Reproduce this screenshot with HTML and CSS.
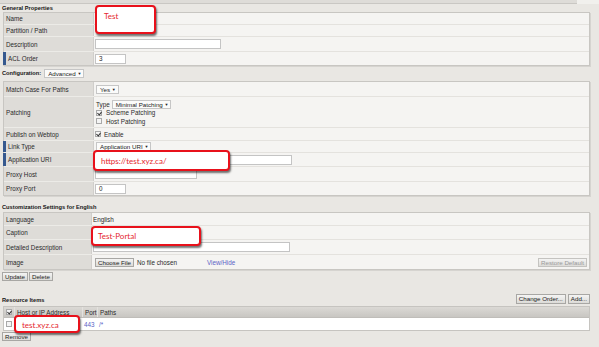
FILE: index.html
```html
<!DOCTYPE html>
<html lang="en">
<head>
  <meta charset="UTF-8" />
  <title>Access Resource Properties</title>
  <link rel="stylesheet" href="styles.css">
</head>
<body>
  <div class="top-strip"><div class="strip-bar"></div></div>

  <div class="section-title gp-title">General Properties</div>
  <div class="props">
    <div class="prow h11"><div class="lbl">Name</div><div class="val"></div></div>
    <div class="prow h12"><div class="lbl">Partition / Path</div><div class="val"></div></div>
    <div class="prow h15"><div class="lbl">Description</div><div class="val"><span class="input w125"></span></div></div>
    <div class="prow h14"><div class="lbl req">ACL Order</div><div class="val"><span class="input w30">3</span></div></div>
  </div>

  <div class="section-title cfg-title">Configuration: <span class="select">Advanced <i>▼</i></span></div>
  <div class="props">
    <div class="prow h14"><div class="lbl">Match Case For Paths</div><div class="val"><span class="select">Yes <i>▼</i></span></div></div>
    <div class="prow h31">
      <div class="lbl">Patching</div>
      <div class="val stack">
        <div class="line">Type <span class="select">Minimal Patching <i>▼</i></span></div>
        <div class="line"><span class="check on"></span>Scheme Patching</div>
        <div class="line"><span class="check"></span>Host Patching</div>
      </div>
    </div>
    <div class="prow h13"><div class="lbl">Publish on Webtop</div><div class="val"><span class="check on"></span>Enable</div></div>
    <div class="prow h12"><div class="lbl req">Link Type</div><div class="val"><span class="select">Application URI <i>▼</i></span></div></div>
    <div class="prow h14"><div class="lbl req">Application URI</div><div class="val"><span class="input w196"></span></div></div>
    <div class="prow h15"><div class="lbl">Proxy Host</div><div class="val"><span class="input w101"></span></div></div>
    <div class="prow h14"><div class="lbl">Proxy Port</div><div class="val"><span class="input w30">0</span></div></div>
  </div>

  <div class="section-title cust-title">Customization Settings for English</div>
  <div class="props narrow">
    <div class="prow h12"><div class="lbl">Language</div><div class="val">English</div></div>
    <div class="prow h14"><div class="lbl">Caption</div><div class="val"></div></div>
    <div class="prow h15"><div class="lbl">Detailed Description</div><div class="val"><span class="input w196"></span></div></div>
    <div class="prow h15">
      <div class="lbl">Image</div>
      <div class="val">
        <span class="btn">Choose File</span>
        <span class="nofile">No file chosen</span>
        <a class="link">View/Hide</a>
        <span class="btn disabled restore">Restore Default</span>
      </div>
    </div>
  </div>
  <div class="btn-row">
    <span class="btn">Update</span>
    <span class="btn">Delete</span>
  </div>

  <div class="res-head">
    <div class="section-title">Resource Items</div>
    <div class="res-actions">
      <span class="btn">Change Order...</span>
      <span class="btn">Add...</span>
    </div>
  </div>
  <div class="items">
    <div class="irow head">
      <div class="c-chk"><span class="check on"></span></div>
      <div>Host or IP Address</div>
      <div>Port</div>
      <div>Paths</div>
    </div>
    <div class="irow">
      <div class="c-chk"><span class="check"></span></div>
      <div></div>
      <div><a class="link">443</a></div>
      <div><a class="link">/*</a></div>
    </div>
  </div>
  <div class="btn-row remove-row">
    <span class="btn">Remove</span>
  </div>

  <div class="callout callout-name">Test</div>
  <div class="callout callout-uri">https://test.xyz.ca/</div>
  <div class="callout callout-caption">Test-Portal</div>
  <div class="callout callout-host">test.xyz.ca</div>
</body>
</html>
```

FILE: styles.css
```css
* {
  margin: 0;
  padding: 0;
  box-sizing: border-box;
}

body {
  position: relative;
  width: 599px;
  height: 347px;
  overflow: hidden;
  background: #e9e7e3;
  font-family: 'Liberation Sans', Arial, sans-serif;
  font-size: 6.3px;
  line-height: 7px;
  color: #2a2a2a;
  padding: 0 9px 0 3px;
}

.top-strip {
  height: 4px;
  margin: 0 -9px 0 -3px;
  background: #f1f0ed;
}

.strip-bar {
  width: 577px;
  height: 4px;
  background: #dedcd8;
  border-bottom: 1px solid #c9c7c3;
}

.section-title {
  font-weight: bold;
  font-size: 5.7px;
  margin-left: -1px;
  color: #151515;
}

.gp-title {
  height: 8px;
  padding-top: 1px;
}

.cfg-title {
  display: flex;
  align-items: center;
  gap: 2px;
  height: 15px;
  padding-bottom: 1px;
}

.cust-title {
  height: 16px;
  padding-top: 8px;
}

/* property tables */
.props {
  width: 587px;
  background: #f5f4f2;
  border: 1px solid #c8c6c2;
  box-shadow: 1px 1px 0 #d6d4d0;
}

.prow {
  display: grid;
  grid-template-columns: 90px 1fr;
  border-top: 1px solid #e4e2de;
}

.prow:first-child {
  border-top: none;
}

.props.narrow .prow {
  grid-template-columns: 88px 1fr;
}

.h11 { height: 11px; }
.h12 { height: 12px; }
.h13 { height: 13px; }
.h14 { height: 14px; }
.h15 { height: 15px; }
.h31 { height: 31px; }

.lbl {
  display: flex;
  align-items: center;
  background: #dedcd8;
  border-right: 1px solid #d0cecb;
  padding-left: 2px;
}

.prow + .prow .lbl {
  box-shadow: 0 -1px 0 #ecebe7;
}

.prow .lbl.req {
  padding-left: 4px;
  box-shadow: 0 -1px 0 #ecebe7, -1px 0 0 #36598f, inset 2px 0 0 #36598f;
}

.val {
  display: flex;
  align-items: center;
  padding-left: 1px;
}

.val.stack {
  flex-direction: column;
  align-items: flex-start;
  justify-content: flex-start;
  padding-top: 3px;
  padding-left: 2px;
}

.line {
  display: flex;
  align-items: center;
  gap: 1px;
  height: 8.5px;
}

.input {
  display: inline-block;
  height: 10px;
  line-height: 8px;
  background: #fff;
  border: 1px solid #c4c4c4;
  padding-left: 3px;
}

.w30 { width: 31px; }
.w101 { width: 102px; }
.w125 { width: 126px; }
.w196 { width: 197px; }

.select {
  display: inline-block;
  height: 9px;
  line-height: 7px;
  padding: 0 2px 0 3px;
  margin-left: 1px;
  background: #fbfbfa;
  border: 1px solid #c6c6c6;
  font-weight: normal;
  font-size: 6.2px;
  color: #222;
}

.select i {
  font-style: normal;
  font-size: 4px;
  vertical-align: 1px;
}

.check {
  display: inline-block;
  position: relative;
  width: 6px;
  height: 6px;
  margin-right: 3px;
  background: #f4f4f4;
  border: 1px solid #a9a9a9;
}

.check.on::after {
  content: '';
  position: absolute;
  left: 1px;
  top: 0;
  width: 2px;
  height: 3px;
  border-right: 1px solid #333;
  border-bottom: 1px solid #333;
  transform: rotate(40deg);
}

.btn {
  display: inline-block;
  height: 9px;
  line-height: 7px;
  padding: 0 2px;
  font-size: 6.2px;
  color: #222;
  background: linear-gradient(#f4f4f3, #dcdbd8);
  border: 1px solid #a8a7a4;
}

.btn.disabled {
  color: #9a9a9a;
  border-color: #c4c3c0;
}

.link {
  color: #5a62c6;
}

.val .btn {
  margin-left: 2px;
}

.nofile {
  margin-left: 3px;
  width: 70px;
}

.restore {
  margin-left: auto !important;
  margin-right: 2px;
}

.btn-row {
  display: flex;
  gap: 1px;
  height: 12px;
  align-items: center;
  margin-left: -1px;
}

.remove-row {
  height: 11px;
  align-items: flex-start;
  padding-top: 1px;
}

.res-head {
  display: flex;
  align-items: flex-end;
  justify-content: space-between;
  width: 587px;
  height: 24px;
  padding-bottom: 2px;
}

.res-actions {
  display: flex;
  gap: 2px;
}

.res-actions .btn {
  height: 10px;
}

/* resource items */
.items {
  width: 587px;
  border: 1px solid #c6c4c0;
  background: #fff;
}

.irow {
  display: grid;
  grid-template-columns: 10px 68px 15px 1fr;
  height: 12px;
}

.irow > div {
  display: flex;
  align-items: center;
  padding-left: 2px;
}

.irow.head {
  height: 11px;
  background: linear-gradient(#dbd9d5, #c8c6c2);
  border-bottom: 1px solid #bfbdb9;
}

.irow.head > div + div {
  border-left: 1px solid #e4e2de;
}

.irow .c-chk .check {
  margin-right: 0;
}

/* red annotation boxes */
.callout {
  position: absolute;
  background: #fff;
  border: 2.5px solid #e8111b;
  border-radius: 4px;
  box-shadow: 1px 2px 2px rgba(0, 0, 0, 0.55);
  color: #e5262e;
  font-family: Lato, 'Open Sans', sans-serif;
  font-size: 8px;
  line-height: 1;
}

.callout-name {
  left: 95px;
  top: 5px;
  width: 61px;
  height: 29px;
  padding: 5px 0 0 7px;
}

.callout-uri {
  left: 93px;
  top: 150px;
  width: 137px;
  height: 21px;
  padding: 5px 0 0 6px;
}

.callout-caption {
  left: 91px;
  top: 226px;
  width: 110px;
  height: 20px;
  padding: 4px 0 0 5px;
}

.callout-host {
  left: 14px;
  top: 315px;
  width: 66px;
  height: 18px;
  padding: 4px 0 0 6px;
}
```
